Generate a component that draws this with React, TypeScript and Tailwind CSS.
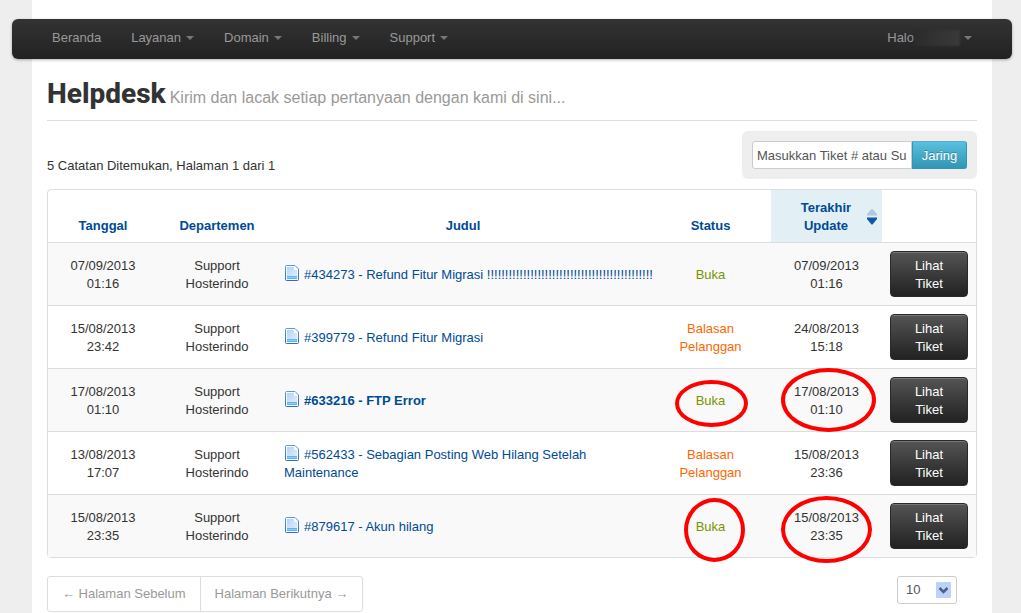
import React from 'react';

interface Ticket {
  date: string;
  time: string;
  title: string;
  status: 'Buka' | 'Balasan Pelanggan';
  updatedDate: string;
  updatedTime: string;
  unread?: boolean;
  nowrap?: boolean;
  statusMark?: string;
  updateMark?: string;
}

const tickets: Ticket[] = [
  { date: '07/09/2013', time: '01:16', title: '#434273 - Refund Fitur Migrasi !!!!!!!!!!!!!!!!!!!!!!!!!!!!!!!!!!!!!!!!!!!!!!', status: 'Buka', updatedDate: '07/09/2013', updatedTime: '01:16', nowrap: true },
  { date: '15/08/2013', time: '23:42', title: '#399779 - Refund Fitur Migrasi', status: 'Balasan Pelanggan', updatedDate: '24/08/2013', updatedTime: '15:18' },
  {
    date: '17/08/2013',
    time: '01:10',
    title: '#633216 - FTP Error',
    status: 'Buka',
    updatedDate: '17/08/2013',
    updatedTime: '01:10',
    unread: true,
    statusMark: 'left-[25px] top-[11px] w-[73px] h-[47px]',
    updateMark: 'left-[10px] -top-px w-[95px] h-[64px]',
  },
  { date: '13/08/2013', time: '17:07', title: '#562433 - Sebagian Posting Web Hilang Setelah Maintenance', status: 'Balasan Pelanggan', updatedDate: '15/08/2013', updatedTime: '23:36' },
  {
    date: '15/08/2013',
    time: '23:35',
    title: '#879617 - Akun hilang',
    status: 'Buka',
    updatedDate: '15/08/2013',
    updatedTime: '23:35',
    statusMark: 'left-[34px] top-[3px] w-[61px] h-[64px]',
    updateMark: 'left-[10px] top-px w-[91px] h-[67px]',
  },
];

const Caret = () => (
  <svg className="w-2 h-1" viewBox="0 0 8 4" fill="#777" aria-hidden="true">
    <path d="M0 0h8L4 4z" />
  </svg>
);

const DocumentIcon = () => (
  <svg className="inline-block w-4 h-4 mr-1 align-[-2px]" viewBox="0 0 16 16" aria-hidden="true">
    <defs>
      <linearGradient id="docEdge" x1="0" y1="0" x2="0" y2="1">
        <stop offset="0" stopColor="#5b9bd8" />
        <stop offset="1" stopColor="#3a68bd" />
      </linearGradient>
      <linearGradient id="docFill" x1="0" y1="0" x2="1" y2="1">
        <stop offset="0" stopColor="#b5d3f5" />
        <stop offset="1" stopColor="#dfecfd" />
      </linearGradient>
    </defs>
    <path d="M2.500 .5h8.500l3.500 3.500v10.500a1 1 0 0 1-1 1h-11a1 1 0 0 1-1-1v-13a1 1 0 0 1 1-1z" fill="#f4f9ff" stroke="url(#docEdge)" />
    <path d="M3 2h7v3h3v6H3z" fill="url(#docFill)" />
    <path d="M10 1v4h4z" fill="#fff" />
    <path d="M3 11h10v3H3z" fill="#5cb6fb" />
    <path d="M3 12h10v1H3z" fill="#84cbff" />
  </svg>
);

const NavItem: React.FC<{ label: string; dropdown?: boolean }> = ({ label, dropdown }) => (
  <li>
    <a href="#" className="flex items-center gap-[5px] h-10 px-[15px] pb-[2px] text-[#999] hover:text-white">
      {label}
      {dropdown && <Caret />}
    </a>
  </li>
);

const Mark: React.FC<{ place?: string }> = ({ place }) =>
  place ? <span className={`absolute z-10 rounded-[50%] border-4 border-[#f00] pointer-events-none ${place}`} /> : null;

const App: React.FC = () => {
  return (
    <div className="min-h-screen bg-[#eee] pl-8 pr-[29px] font-['Liberation_Sans',Arial,sans-serif] text-[13px] leading-[18px] text-[#333]">
      <div className="min-h-screen bg-white pt-[19px]">
        <nav className="-mx-5 flex justify-between px-[25px] h-10 rounded-md bg-linear-to-b from-[#333] to-[#222] shadow-[0_1px_3px_rgba(0,0,0,0.3)]">
          <ul className="flex">
            <NavItem label="Beranda" />
            <NavItem label="Layanan" dropdown />
            <NavItem label="Domain" dropdown />
            <NavItem label="Billing" dropdown />
            <NavItem label="Support" dropdown />
          </ul>
          <a href="#" className="flex items-center h-10 px-[15px] pb-[2px] text-[#999]">
            Halo
            <span className="w-[46px] h-4 mr-1 bg-linear-to-r from-[#2b2b2b] to-[#3a3a3a] blur-[1px]" />
            <Caret />
          </a>
        </nav>

        <main className="px-[15px]">
          <header className="flex items-baseline gap-1 pt-[17px] pb-2 border-b border-[#ddd]">
            <h1 className="font-['Roboto',sans-serif] font-extrabold text-[28px] leading-9">Helpdesk</h1>
            <p className="text-base text-[#999]">Kirim dan lacak setiap pertanyaan dengan kami di sini...</p>
          </header>

          <div className="flex items-center justify-between mt-[10px] mb-[10px]">
            <p className="pt-[22px]">5 Catatan Ditemukan, Halaman 1 dari 1</p>
            <form className="flex p-[10px] rounded-md bg-[#eee]" onSubmit={(e) => e.preventDefault()}>
              <input
                type="text"
                aria-label="Cari tiket"
                defaultValue="Masukkan Tiket # atau Subyek"
                className="w-40 h-7 px-1 rounded-l-[3px] border border-[#ccc] bg-white text-[#555]"
              />
              <button
                type="submit"
                className="w-[55px] h-7 pt-[2px] rounded-r-[3px] border border-[#2f96b4] border-t-[#4db0cc] bg-linear-to-b from-[#5bc0de] to-[#2f96b4] text-white [text-shadow:0_-1px_0_rgba(0,0,0,0.25)]"
              >
                Jaring
              </button>
            </form>
          </div>

          <table className="w-full table-fixed border-separate border-spacing-0 border border-[#ddd] rounded text-center">
            <colgroup>
              <col className="w-[110px]" />
              <col className="w-[118px]" />
              <col />
              <col className="w-[121px]" />
              <col className="w-[111px]" />
              <col className="w-[94px]" />
            </colgroup>
            <thead className="text-[#004a95] align-bottom">
              <tr>
                <th className="px-2 pt-[9px] pb-[7px]">Tanggal</th>
                <th className="px-2 pt-[9px] pb-[7px]">Departemen</th>
                <th className="px-2 pt-[9px] pb-[7px]">Judul</th>
                <th className="px-2 pt-[9px] pb-[7px]">Status</th>
                <th className="px-2 pt-[9px] pb-[7px] bg-[#e2eff5]">
                  <div className="flex items-center">
                    <span className="flex-1 pl-[6px]">Terakhir Update</span>
                    <svg className="w-[10px] h-4 -mr-[3px]" viewBox="0 0 10 16" aria-hidden="true">
                      <path d="M4.500 0h1L10 5v1.500H0V5z" fill="#b2c8de" />
                      <path d="M0 8.500h10V10l-4.500 5.500h-1L0 10z" fill="#0f56a8" />
                    </svg>
                  </div>
                </th>
                <th className="p-2" />
              </tr>
            </thead>
            <tbody>
              {tickets.map((t) => (
                <tr key={t.title} className="odd:bg-[#f9f9f9]">
                  <td className="px-2 pt-[9px] pb-[7px] border-t border-[#ddd]">{t.date}<br />{t.time}</td>
                  <td className="px-2 pt-[9px] pb-[7px] border-t border-[#ddd]">Support<br />Hosterindo</td>
                  <td className={`p-2 border-t border-[#ddd] text-left ${t.nowrap ? 'whitespace-nowrap' : ''}`}>
                    <a href="#" className={t.unread ? 'text-[#004a95] font-bold' : 'text-[#004a95]'}>
                      <DocumentIcon />
                      {t.title}
                    </a>
                  </td>
                  <td className={`relative px-2 pt-[9px] pb-[7px] border-t border-[#ddd] ${t.status === 'Buka' ? 'text-[#779500]' : 'text-[#f60]'}`}>
                    {t.status}
                    <Mark place={t.statusMark} />
                  </td>
                  <td className="relative px-2 pt-[9px] pb-[7px] border-t border-[#ddd]">
                    {t.updatedDate}<br />{t.updatedTime}
                    <Mark place={t.updateMark} />
                  </td>
                  <td className="p-2 border-t border-[#ddd]">
                    <button
                      type="button"
                      className="block w-full px-4 pt-[5px] pb-[3px] rounded border border-[#2a2a2a] bg-linear-to-b from-[#555] to-[#222] text-white shadow-[inset_0_1px_0_rgba(255,255,255,0.2)]"
                    >
                      Lihat Tiket
                    </button>
                  </td>
                </tr>
              ))}
            </tbody>
          </table>

          <div className="flex items-start justify-between mt-[18px]">
            <div className="flex border border-[#ddd] rounded-[3px] leading-[34px] text-[#999]">
              <a href="#" className="px-[14px] border-r border-[#ddd]">← Halaman Sebelum</a>
              <a href="#" className="px-[14px]">Halaman Berikutnya →</a>
            </div>
            <div className="relative mr-5">
              <select aria-label="Jumlah per halaman" defaultValue="10" className="appearance-none w-[60px] h-7 pl-2 rounded-[3px] border border-[#ccc] bg-white text-[#555]">
                <option>10</option>
                <option>25</option>
                <option>50</option>
              </select>
              <svg className="absolute right-[6px] top-[6px] w-[15px] h-4 pointer-events-none" viewBox="0 0 15 16" aria-hidden="true">
                <rect width="15" height="16" rx="1" fill="#bdd1fb" />
                <path d="M3.500 6l4 4 4-4" fill="none" stroke="#4d6185" strokeWidth="2.500" />
              </svg>
            </div>
          </div>
        </main>
      </div>
    </div>
  );
};

export default App;
